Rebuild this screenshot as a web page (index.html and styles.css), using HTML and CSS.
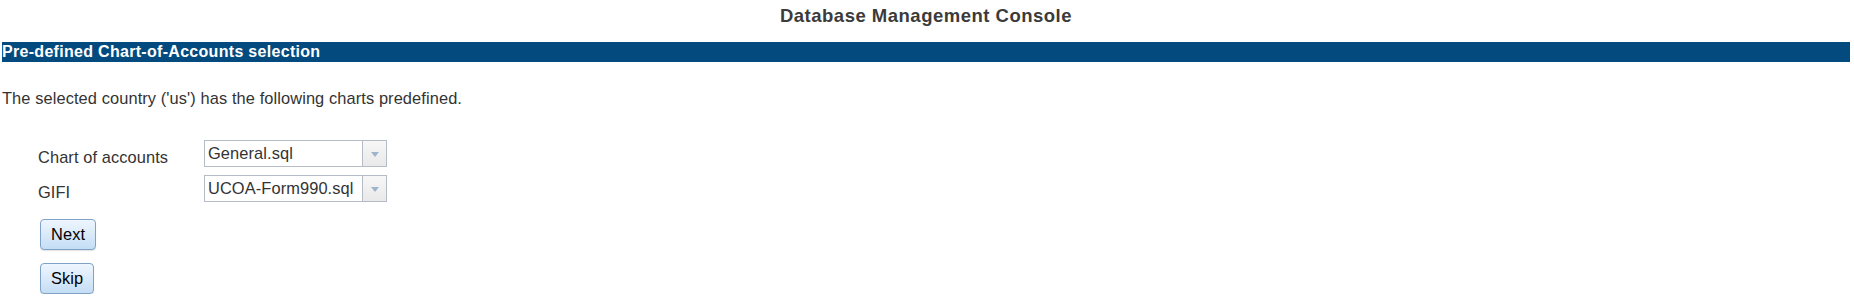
FILE: index.html
```html
<!DOCTYPE html>
<html>
<head>
    <title>Database Management Console</title>
    <link rel="stylesheet" href="styles.css">
</head>
<body>
    <h1 class="title">Database Management Console</h1>

    <h2 class="section-bar">Pre-defined Chart-of-Accounts selection</h2>

    <p class="intro">The selected country ('us') has the following charts predefined.</p>

    <form class="coa-form" onsubmit="return false;">
        <div class="field-grid">
            <label class="field-label">Chart of accounts</label>
            <div class="combo">
                <span class="combo-value">General.sql</span>
                <span class="combo-arrow"><span class="arrow-tri"></span></span>
            </div>

            <label class="field-label">GIFI</label>
            <div class="combo">
                <span class="combo-value">UCOA-Form990.sql</span>
                <span class="combo-arrow"><span class="arrow-tri"></span></span>
            </div>
        </div>

        <div class="actions">
            <button class="btn" type="submit">Next</button>
            <button class="btn" type="button">Skip</button>
        </div>
    </form>
</body>
</html>
```

FILE: styles.css
```css
* {
    box-sizing: border-box;
}

body {
    margin: 0;
    padding: 0 4px 0 2px;
    font-family: "Liberation Sans", Arial, sans-serif;
    font-size: 16.4px;
    letter-spacing: 0.1px;
    color: #333333;
    background: #ffffff;
}

.title {
    margin: 0;
    padding-top: 5px;
    height: 27px;
    line-height: 22px;
    font-size: 18.5px;
    font-weight: bold;
    letter-spacing: 0.5px;
    text-align: center;
    color: #3b3b3b;
}

.section-bar {
    margin: 15px 0 0 0;
    height: 20px;
    line-height: 20px;
    font-size: 16px;
    font-weight: bold;
    letter-spacing: 0.3px;
    color: #ffffff;
    background: #034a7e;
}

.intro {
    margin: 27px 0 0 0;
    line-height: 19px;
}

.coa-form {
    margin: 32px 0 0 36px;
}

.field-grid {
    display: grid;
    grid-template-columns: 166px 183px;
    grid-auto-rows: 27px;
    row-gap: 8px;
}

.field-label {
    align-self: end;
    line-height: 19px;
}

.combo {
    display: flex;
    height: 27px;
    border: 1px solid #b5bcc7;
    background: #ffffff;
}

.combo-value {
    flex: 1;
    padding-left: 3px;
    line-height: 25px;
    color: #333333;
    white-space: nowrap;
    overflow: hidden;
}

.combo-arrow {
    width: 24px;
    border-left: 1px solid #b5bcc7;
    background: linear-gradient(#f7f7f7, #e9e9e9);
    display: flex;
    align-items: center;
    justify-content: center;
}

.arrow-tri {
    width: 0;
    height: 0;
    border-left: 4px solid transparent;
    border-right: 4px solid transparent;
    border-top: 5px solid #9fb4cb;
    margin-top: 1px;
}

.actions {
    margin: 17px 0 0 2px;
    display: flex;
    flex-direction: column;
    align-items: flex-start;
    gap: 13px;
}

.btn {
    height: 31px;
    padding: 0 10px;
    border: 1px solid #7fa3c6;
    border-radius: 4px;
    background: linear-gradient(#eef6fe 0%, #dcebfa 45%, #c4ddf5 100%);
    box-shadow: 0 1px 1px rgba(0, 0, 0, 0.12);
    font-family: "Liberation Sans", Arial, sans-serif;
    font-size: 16.4px;
    letter-spacing: 0.1px;
    line-height: 29px;
    color: #000000;
    cursor: pointer;
}
```
